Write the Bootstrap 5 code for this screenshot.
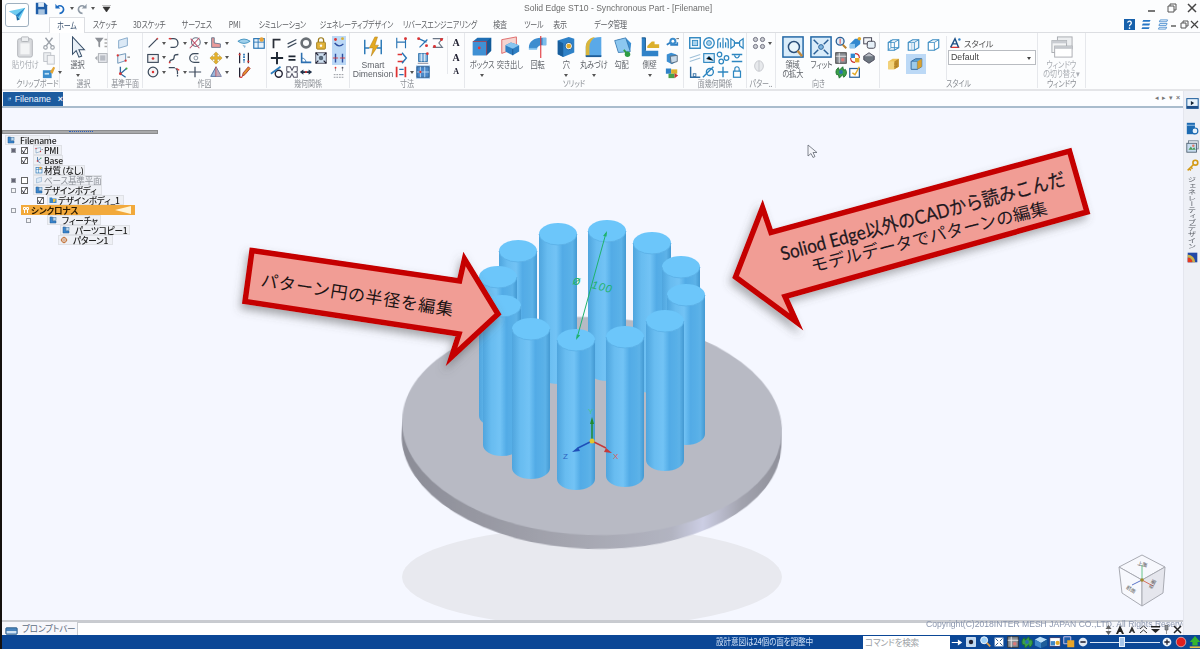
<!DOCTYPE html>
<html lang="ja">
<head>
<meta charset="utf-8">
<title>Solid Edge ST10</title>
<link href="https://cdn.jsdelivr.net/npm/bootstrap@5.3.0/dist/css/bootstrap.min.css" rel="stylesheet">
<style>
html,body{height:100%;margin:0;overflow:hidden;background:#fff}
body{font-family:"Liberation Sans","Noto Sans CJK JP",sans-serif;font-size:9px;color:#555}
.app{width:1200px;height:649px;border-left:2px solid #15110f;background:#fcfdfe}
.jp{font-family:"Noto Sans CJK JP","Liberation Sans",sans-serif;font-feature-settings:"palt";letter-spacing:-.2px}
.titlebar{height:17px}
.appbtn{position:absolute;left:3px;top:3px;width:24px;height:24px;border:1px solid #9fb0bf;border-radius:3px;background:#fff}
.qat{padding-left:33px;height:17px}
.wintitle{position:absolute;left:522px;top:2px;font-size:8.6px;color:#6d6d6d;white-space:nowrap;line-height:13px;filter:blur(.3px)}
.winbtns{position:absolute;right:2px;top:2px}
.tabs{height:16px;padding-left:47px;border-bottom:1px solid #dcdee2;position:relative;filter:blur(.25px)}
.rtab{font-size:9.2px;color:#5d5f63;line-height:15px;white-space:nowrap;display:flex;justify-content:center;flex:none}
.rtab>span{display:inline-block;transform:scaleX(.76)}
.rtab.on{background:#fff;border:1px solid #dcdee2;border-bottom:0;height:17px;color:#38506d;width:36px}
.w-a{width:40px}.w-b{width:48px}.w-c{width:48px}.w-d{width:28px}.w-e{width:66px}.w-f{width:82px}.w-g{width:86px}.w-h{width:34px}.w-i{width:34px}.w-j{width:18px}.w-k{width:84px}
.helpbar{position:absolute;right:1px;top:0;height:14px;gap:1px}
.ribbon{height:58px;background:#fcfdfe;border-bottom:2px solid #e4e5e8;filter:blur(.28px)}
.rg{height:55px;position:relative;border-right:1px solid #e6e8ec;flex:none;padding-top:3px}
.rl{position:absolute;left:0;right:0;bottom:-1px;text-align:center;font-size:8.6px;line-height:11px;color:#8a8e94;white-space:nowrap;transform:scaleX(.82)}
.rw{display:flex;height:14.5px;align-items:center}
.ic{width:14px;height:14px;flex:none;display:block}
.ic2{width:15px;height:14px;flex:none;display:block}
.ca{width:7px;flex:none;text-align:center;font-size:0;display:flex;justify-content:center}
.ca::after{content:"";border:2px solid transparent;border-top:3px solid #555;margin-top:2px}
.ca.nn::after{display:none}
.bb{display:flex;flex-direction:column;align-items:center;flex:none;color:#60646a;font-size:8.8px;line-height:8.6px;white-space:nowrap}
.bb>span{display:inline-block;transform:scaleX(.82)}
.bb svg{width:24px;height:22px;flex:none;margin-bottom:3px}
.bcar{display:block;width:0;height:0;border:2px solid transparent;border-top:3px solid #555;margin-top:4px}
.dis{color:#a9adb3}
.hl{background:#bcd9f6}
.g1{width:58px;padding-left:8px}.g1 .rl{left:10px}.g2{width:48px;padding-left:6px}.g3{width:35px;padding-left:8px}
.g4{width:124px;padding-left:3px}.g5{width:83px;padding-left:3px}.g6{width:115px;padding-left:4px}
.g7{width:219px;padding-left:3px}.g8{width:63px;padding-left:4px}.g9{width:29px;padding-left:5px}
.g10{width:104px;padding-left:3px}.g11{width:158px;padding-left:6px}.g12{width:48px}
.w28{width:28px}.w38{width:38px}
.sdim{font-family:"Liberation Sans",sans-serif;letter-spacing:0;font-size:8.6px}
.sdim>span{transform:none}
.sp1{width:1px;flex:none}.sp2{width:2px;flex:none}.sp4{width:4px;flex:none}.sp7{width:7px;flex:none}
.vsep{width:1px;height:38px;background:#e6e8ec;margin:0 1px;flex:none}
.aa{width:14px;height:14.5px;font:700 10px/14px "Liberation Serif",serif;color:#223;text-align:center}
.stylesel{width:88px;height:15px;border:1px solid #b9bcc1;background:#fff;font-size:8.8px;line-height:13px;padding-left:2px;color:#444;position:relative;font-family:"Liberation Sans",sans-serif;letter-spacing:0}
.stylesel::after{content:"";position:absolute;right:4px;top:6px;border:2.5px solid transparent;border-top:3px solid #444}
.stlab{font-size:8.4px;line-height:14px;gap:2px;color:#555}
.cubehl{background:#bcd9f6;width:20px;height:20px;display:flex;align-items:center;justify-content:center}
.docrow{height:15px;position:relative;background:#fcfdff}
.doctab{position:absolute;left:1px;top:1px;width:60px;height:14px;background:#1c5b9f;color:#eef5ff;font-size:8.8px;line-height:14px;padding-left:4px;gap:3px}
.doctools{position:absolute;right:3px;top:3px;gap:3px;font-size:7px;color:#777;line-height:8px}
.rule{height:2px;background:#a9bccd}
.ws{position:relative;height:512px;background:#f5f7ff;overflow:hidden}
.ws>svg{display:block}
.tree{position:absolute;left:0;top:22px;width:156px;color:#222;font-size:8.6px}
.trgrip{height:4px;background:#a8a9ab;border:1px solid #8b8c8e;margin-bottom:1px;position:relative}
.trgrip::after{content:"";position:absolute;left:66px;top:0;width:24px;border-top:1px dotted #2a5fc0}
.tr{height:10px;display:flex;align-items:center;position:relative;filter:blur(.2px)}
.exp{position:absolute;width:5px;height:5px;border:1px solid #9a9ea6;background:#f4f4f6;top:3px}
.exp.fill::after{content:"";display:block;width:3px;height:3px;background:#667;}
.cb{position:absolute;width:7px;height:7px;border:1px solid #666;background:#fff;top:2px;font-size:7px;line-height:5px;color:#223;text-align:center;font-weight:700}
.chip{position:absolute;top:0;height:10px;background:#eef0f5;border:1px solid #dfe1e6;display:flex;align-items:center;gap:1px;white-space:nowrap;line-height:8px;font-weight:500;padding-left:1px}
.chip svg{width:8px;height:8px;flex:none}
.grey{color:#8e9299;font-weight:400}
.orange{background:#f2a93b;border:0;font-weight:700;color:#2a1a00}
.side{width:17px;flex:none;background:#eef0f6;border-left:1px solid #e4e6ee;position:relative;padding-top:2px;align-items:center}
.side svg{display:block}
.vtxt{writing-mode:vertical-rl;font-size:8.4px;line-height:10px;color:#5c6068;white-space:nowrap;height:72px;margin:0;transform:scaleY(.74);transform-origin:top}
.prompt{height:15px;border-top:2px solid #c9cbd0;background:#f7f7fb;padding-left:3px;position:relative;gap:4px;font-size:8.6px;color:#5d6c80;line-height:13px}
.pinput{width:1032px;height:13px;background:#fff;border:1px solid #c7cacf;border-bottom:0;flex:none;margin-left:-1px}
.ptools{position:absolute;right:1px;top:1px;gap:3px;height:13px}
.copyr{position:absolute;left:924px;top:-2px;font-size:8.6px;color:#8b96ae;white-space:nowrap;line-height:9px;filter:blur(.25px);font-family:"Liberation Sans",sans-serif;letter-spacing:0}
.status{height:14px;background:#0b4796;position:relative;color:#cfe0f6}
.stmsg{position:absolute;left:714px;top:0;font-size:8.8px;line-height:14px;white-space:nowrap;transform:scaleX(.87);transform-origin:left}
.stsearch{position:absolute;left:861px;top:1px;width:87px;height:13px;background:#fff;color:#9b9fa5;font-size:8.6px;line-height:13px;padding-left:2px}
.sticons{position:absolute;left:948px;top:0;height:14px;gap:0}
.sticons svg{width:14px;height:14px;flex:none;display:block}
.slider{width:70px;height:14px;flex:none;position:relative}
.slider::before{content:"";position:absolute;left:0;right:0;top:7px;border-top:1px solid #dbe7f7}
.slider::after{content:"";position:absolute;left:29px;top:2px;width:6px;height:10px;background:#a9c6ea;border:1px solid #e8f0fa}
</style>
</head>
<body>
<svg width="0" height="0" class="position-absolute">
<defs>
<linearGradient id="cg" x1="0" x2="1" y1="0" y2="0"><stop offset="0" stop-color="#4fa5de"/><stop offset=".22" stop-color="#68bcf0"/><stop offset=".45" stop-color="#72c3f5"/><stop offset=".62" stop-color="#52abe6"/><stop offset=".88" stop-color="#5cb2e8"/><stop offset="1" stop-color="#4499d2"/></linearGradient>
<linearGradient id="dk" x1="0" x2="1" y1="0" y2="0"><stop offset="0" stop-color="#8b8c96"/><stop offset=".45" stop-color="#a4a5af"/><stop offset=".72" stop-color="#b2b4c1"/><stop offset=".8" stop-color="#cccee4"/><stop offset=".9" stop-color="#a2a3ae"/><stop offset="1" stop-color="#8f909a"/></linearGradient>
<filter id="ds" x="-10%" y="-20%" width="125%" height="150%"><feDropShadow dx="-2" dy="5" stdDeviation="4.5" flood-color="#555" flood-opacity=".5"/></filter>
<filter id="ds2" x="-10%" y="-20%" width="125%" height="150%"><feDropShadow dx="-3" dy="5" stdDeviation="4.5" flood-color="#555" flood-opacity=".45"/></filter>
<filter id="soft"><feGaussianBlur stdDeviation=".3"/></filter>
<g id="cyl"><path d="M-19 0V139A19 11 0 0 0 19 139V0Z" fill="url(#cg)"/><ellipse rx="19" ry="11" fill="#6cc6fa"/><path d="M-19 0A19 11 0 0 0 19 0" fill="none" stroke="#5aaee4" stroke-width=".8"/></g>

<symbol id="scis" viewBox="0 0 16 16"><path d="M4 2l7 9M12 2l-7 9" stroke="#9aa0a8" stroke-width="1.6" fill="none"/><circle cx="4" cy="13" r="2" fill="none" stroke="#9aa0a8" stroke-width="1.3"/><circle cx="12" cy="13" r="2" fill="none" stroke="#9aa0a8" stroke-width="1.3"/></symbol>
<symbol id="copy" viewBox="0 0 16 16"><rect x="2" y="2" width="8" height="10" fill="#eceef1" stroke="#bcc0c6"/><rect x="6" y="5" width="8" height="10" fill="#f3f4f6" stroke="#bcc0c6"/></symbol>
<symbol id="brush" viewBox="0 0 16 16"><rect x="1" y="6" width="10" height="9" fill="#3a8ccc"/><path d="M9 8l4-6 2 1-3 7z" fill="#e2a534"/><path d="M3 9h5v2H3z" fill="#bfe0f5"/></symbol>
<symbol id="filt" viewBox="0 0 16 16"><path d="M1 2h10l-4 5v6l-2-1V7z" fill="#8d9197"/><path d="M12 4h3M12 8h3M12 12h3" stroke="#aaa" stroke-width="1.5"/></symbol>
<symbol id="grp" viewBox="0 0 16 16"><rect x="5" y="3" width="10" height="10" fill="#e8eaee" stroke="#a8acb2"/><rect x="7" y="5" width="6" height="6" fill="#b8bcc4"/><path d="M1 8l3-3v6z" fill="#a8acb2"/></symbol>
<symbol id="pl1" viewBox="0 0 16 16"><path d="M3 5l10-3v9L3 14z" fill="#dbe9f6" stroke="#7ea3c6"/></symbol>
<symbol id="pl2" viewBox="0 0 16 16"><path d="M2 5l9-2v8l-9 3z" fill="#eef3f9" stroke="#5f8ab0"/><circle cx="2" cy="5" r="1.3" fill="#d33"/><circle cx="11" cy="11" r="1.3" fill="#d33"/><path d="M13 7h3" stroke="#555"/></symbol>
<symbol id="pl3" viewBox="0 0 16 16"><path d="M5 2v8l6 4M5 10l7-6" stroke="#2d6aa0" stroke-width="1.5" fill="none"/><circle cx="5" cy="10" r="1.6" fill="#d33"/><circle cx="12" cy="4" r="1.2" fill="#4a4"/></symbol>
<symbol id="ln" viewBox="0 0 16 16"><path d="M3 13L13 3" stroke="#3d4b5c" stroke-width="1.5"/><circle cx="13" cy="3" r="1" fill="#d44"/></symbol>
<symbol id="arc" viewBox="0 0 16 16"><path d="M3 3h4a5 5 0 0 1 1 10H4" stroke="#3d4b5c" stroke-width="1.5" fill="none"/><path d="M2 3h3" stroke="#d33" stroke-width="1.6"/></symbol>
<symbol id="xc" viewBox="0 0 16 16"><circle cx="9" cy="7" r="5" stroke="#6d7a8a" stroke-width="1.3" fill="none"/><path d="M3 3l10 11M13 2L2 14" stroke="#c0506a" stroke-width="1.2"/></symbol>
<symbol id="cor" viewBox="0 0 16 16"><path d="M3 2h3v6l7 1v4H3z" fill="#ea9a9a" stroke="#64748b"/></symbol>
<symbol id="eye" viewBox="0 0 16 16"><path d="M1 6q7-5 14 0q-7 5-14 0z" fill="#9fd0ec" stroke="#3d8fbd"/><path d="M6 10l4 1-1 3z" fill="#8fb8d6"/></symbol>
<symbol id="note" viewBox="0 0 16 16"><rect x="2" y="3" width="12" height="11" fill="#e7f2fb" stroke="#2874b4" stroke-width="1.3"/><path d="M2 7h12M7 3v11" stroke="#2874b4"/><circle cx="11" cy="4" r="2.5" fill="#e8a33a"/></symbol>
<symbol id="rc" viewBox="0 0 16 16"><rect x="2" y="4" width="12" height="9" fill="#f0f1f3" stroke="#3d4b5c" stroke-width="1.3"/><circle cx="8" cy="8.5" r="1.5" fill="#d33"/></symbol>
<symbol id="cv" viewBox="0 0 16 16"><path d="M3 13c0-5 5-1 5-5s2-4 5-4" stroke="#3d4b5c" stroke-width="1.5" fill="none"/><circle cx="3" cy="13" r="1" fill="#d33"/></symbol>
<symbol id="con" viewBox="0 0 16 16"><path d="M12 3H7a5 5 0 0 0 0 10h6" stroke="#3d4b5c" stroke-width="1.4" fill="none"/><circle cx="9" cy="8" r="2.2" stroke="#7d8a99" fill="none"/></symbol>
<symbol id="mv" viewBox="0 0 16 16"><path d="M8 1l3 3H9.5v2.500H12V5l3 3-3 3V9.500H9.500V12H11l-3 3-3-3h1.500V9.500H4V11L1 8l3-3v1.500h2.500V4H5z" fill="#e6b22c" stroke="#9a7a1a" stroke-width=".4"/></symbol>
<symbol id="dc" viewBox="0 0 16 16"><path d="M3 2v12M13 2v12" stroke="#223" stroke-width="1.4"/><path d="M8 3v10" stroke="#2874b4" stroke-width="2" stroke-dasharray="2 1"/><circle cx="3" cy="4" r="1.2" fill="#d33"/><circle cx="13" cy="12" r="1.2" fill="#d33"/></symbol>
<symbol id="ci" viewBox="0 0 16 16"><circle cx="8" cy="8" r="5.5" fill="#f4f4f6" stroke="#3d4b5c" stroke-width="1.4"/><circle cx="8" cy="8" r="1.4" fill="#d33"/></symbol>
<symbol id="tr2" viewBox="0 0 16 16"><path d="M2 3h6a5 5 0 0 1 4 5v5" stroke="#3d4b5c" stroke-width="1.4" fill="none" stroke-dasharray="7 1"/><path d="M11 4l3 2" stroke="#d33" stroke-width="1.4"/></symbol>
<symbol id="pl" viewBox="0 0 16 16"><path d="M1 8h14M8 2v12" stroke="#3d4b5c" stroke-width="1.4"/></symbol>
<symbol id="tri" viewBox="0 0 16 16"><path d="M8 2l6 11H2z" fill="#9eb7da" stroke="#46689a"/><path d="M8 2v11" stroke="#c33"/><path d="M8 13l6 0-6-11z" fill="#d9a0a8" opacity=".6"/></symbol>
<symbol id="pen" viewBox="0 0 16 16"><path d="M3 3v11" stroke="#223" stroke-width="1.5"/><path d="M6 13l1-4 6-7 2 2-6 7z" fill="#e3932a" stroke="#a33"/><path d="M3 14h3" stroke="#d33" stroke-width="1.5"/></symbol>
<symbol id="gc" viewBox="0 0 16 16"><path d="M4 14V4h8" stroke="#2a2f38" stroke-width="2" fill="none"/></symbol>
<symbol id="gp" viewBox="0 0 16 16"><path d="M3 9l10-5M3 13l10-5" stroke="#3d4b5c" stroke-width="1.4"/></symbol>
<symbol id="gr" viewBox="0 0 16 16"><circle cx="8" cy="8" r="5" fill="none" stroke="#6a7076" stroke-width="3"/></symbol>
<symbol id="gl" viewBox="0 0 16 16"><rect x="3" y="7" width="10" height="8" rx="1" fill="#e2b33a" stroke="#9c7a1a"/><path d="M5 7V5a3 3 0 0 1 6 0v2" stroke="#9c7a1a" stroke-width="1.4" fill="none"/><circle cx="8" cy="11" r="1.4" fill="#fff"/></symbol>
<symbol id="gpl" viewBox="0 0 16 16"><path d="M1 8h14M8 1v14" stroke="#1e2733" stroke-width="2.2"/></symbol>
<symbol id="geq" viewBox="0 0 16 16"><path d="M4 6h8M4 10h8" stroke="#1e2733" stroke-width="2"/></symbol>
<symbol id="gan" viewBox="0 0 16 16"><path d="M3 2v11h11" stroke="#2c6fb0" stroke-width="1.8" fill="none"/><path d="M3 8a5 5 0 0 1 5 5" stroke="#2c6fb0" fill="none"/></symbol>
<symbol id="gsq" viewBox="0 0 16 16"><rect x="2" y="2" width="12" height="12" fill="#cde" stroke="#445"/><circle cx="8" cy="8" r="2.6" fill="#567"/><path d="M2 2l3 3M14 2l-3 3M2 14l3-3M14 14l-3-3" stroke="#223" stroke-width="1.4"/></symbol>
<symbol id="gt" viewBox="0 0 16 16"><circle cx="10" cy="10" r="4" fill="none" stroke="#223" stroke-width="1.6"/><path d="M1 10L12 2" stroke="#2c7dbd" stroke-width="2"/></symbol>
<symbol id="gs" viewBox="0 0 16 16"><path d="M2 2h4l2 4 2-4h4v5l-3 1 3 1v5h-4l-2-4-2 4H2V9l3-1-3-1z" fill="none" stroke="#556" stroke-width="1.2"/></symbol>
<symbol id="gar" viewBox="0 0 16 16"><path d="M1 8l4-3v2h6V5l4 3-4 3V9H5v2z" fill="#22324a"/><circle cx="8" cy="8" r="1.2" fill="#d33"/></symbol>
<symbol id="ghl1" viewBox="0 0 16 16"><circle cx="4" cy="4" r="1.6" fill="#d33"/><circle cx="12" cy="3" r="1.6" fill="#d9b030"/><path d="M3 8q5 6 10 1" stroke="#2c4ea0" stroke-width="1.6" fill="none"/></symbol>
<symbol id="ghl2" viewBox="0 0 16 16"><path d="M4 3v10M12 3v10" stroke="#2c4ea0" stroke-width="1.6"/><path d="M1 8h6M9 8h6" stroke="#d33"/></symbol>
<symbol id="gfx" viewBox="0 0 16 16"><path d="M4 3v4M12 3v4" stroke="#9a9ea6"/><circle cx="4" cy="3" r="1" fill="#e33"/><circle cx="12" cy="3" r="1" fill="#556"/><path d="M2 11h12M2 14h12" stroke="#8a8e96" stroke-dasharray="2 1"/></symbol>
<symbol id="d1" viewBox="0 0 16 16"><path d="M2 2v12M12 2v12M2 7h10" stroke="#2874b4" stroke-width="1.3"/><circle cx="12" cy="3" r="1.7" fill="#d33"/></symbol>
<symbol id="d2" viewBox="0 0 16 16"><path d="M3 3l9 4M4 13l9-9" stroke="#2874b4" stroke-width="1.4"/><circle cx="3" cy="3" r="1.7" fill="#d33"/><circle cx="12" cy="11" r="1.7" fill="#d33"/></symbol>
<symbol id="d3" viewBox="0 0 16 16"><path d="M2 3h11l-4 5 4 5H2" stroke="#6a7686" stroke-width="1.3" fill="none"/><circle cx="12" cy="4" r="1.7" fill="#d33"/><circle cx="4" cy="12" r="1.7" fill="#d33"/></symbol>
<symbol id="d5" viewBox="0 0 16 16"><rect x="3" y="3" width="10" height="9" fill="#7fb1dc" stroke="#2b6fa8"/><path d="M6 3v9M10 3v9" stroke="#fff"/><circle cx="13" cy="3" r="1.5" fill="#d33"/><path d="M2 14h12" stroke="#778"/></symbol>
<symbol id="d7" viewBox="0 0 16 16"><rect x="1" y="2" width="14" height="12" fill="#4a88c9" stroke="#23507f"/><path d="M5 2v12M10 2v12M1 8h14" stroke="#c7e0f6"/><circle cx="5" cy="8" r="1.3" fill="#d33"/></symbol>
<symbol id="d8" viewBox="0 0 16 16"><path d="M3 4h5M3 12h7" stroke="#d33" stroke-width="1.6"/><path d="M8 2l5 6-5 6" stroke="#2874b4" stroke-width="1.6" fill="none"/></symbol>
<symbol id="d9" viewBox="0 0 16 16"><path d="M3 2v12M13 2v12" stroke="#d33" stroke-width="2"/><path d="M6 5h5M6 11h5" stroke="#2874b4" stroke-width="1.6"/></symbol>
<symbol id="sd" viewBox="0 0 24 24"><path d="M3 4v16M21 4v16M3 13h5M16 13h5" stroke="#2d7ab8" stroke-width="1.6" fill="none"/><path d="M14 1L8 13h4l-2 9 8-12h-4l3-9z" fill="#e4a91f" stroke="#a8761a" stroke-width=".5"/></symbol>
<symbol id="b1" viewBox="0 0 24 24"><path d="M2 6l5-4h15v14l-5 5H2z" fill="#1f6fb4"/><path d="M2 6h15v15H2z" fill="#3f90d4"/><path d="M17 6l5-4v14l-5 5z" fill="#125a98"/><circle cx="9" cy="13" r="1.5" fill="#e33"/><path d="M2 6h15v15" stroke="#c33" fill="none" stroke-width=".7"/></symbol>
<symbol id="b2" viewBox="0 0 24 24"><path d="M3 4l16-3v12L3 19z" fill="#f6d4d0" stroke="#d66"/><path d="M7 10l6-3 9 3v7l-7 4-8-4z" fill="#2f7fc3"/><path d="M7 10l8 4 7-4-9-3z" fill="#87c4ef"/><path d="M15 14v7" stroke="#1a5a94"/></symbol>
<symbol id="b3" viewBox="0 0 24 24"><path d="M2 13C2 6 8 2 15 2h6v8h-5c-3 0-5 2-5 4z" fill="#3d8dcf"/><path d="M2 13h9v2H2z" fill="#7cbdeb"/><path d="M17 2h4v8h-4z" fill="#7cbdeb"/><path d="M15 0v24" stroke="#e0353a" stroke-width="1.2"/></symbol>
<symbol id="b4" viewBox="0 0 24 24"><path d="M3 5l12-4 6 2v15l-12 5-6-3z" fill="#2f82c8"/><path d="M3 5l6 3v15l-6-3z" fill="#195e9c"/><circle cx="15" cy="11" r="4" fill="#fff" stroke="#1a5a94"/><circle cx="15" cy="11" r="2.6" fill="#e2a92a"/></symbol>
<symbol id="b5" viewBox="0 0 24 24"><path d="M3 22V12C3 5 9 1 20 1v21z" fill="#5aa9e8"/><path d="M3 22V12C3 5 9 1 13 1C9 4 7 8 7 12v10z" fill="#d9b63c"/><path d="M3 22h17" stroke="#1e5d98" stroke-width="2"/></symbol>
<symbol id="b6" viewBox="0 0 24 24"><path d="M4 5l12-3 6 6-1 9-13 1z" fill="#3c8fd2"/><path d="M4 5l4 13 13-1-5-15z" fill="#8cc7f0" stroke="#1a5a94" stroke-width=".6"/><circle cx="18" cy="20" r="3" fill="#2f9d44"/><path d="M14 15l4 5" stroke="#2f9d44" stroke-width="2"/></symbol>
<symbol id="b7" viewBox="0 0 24 24"><path d="M3 2h4v14h14v6H3z" fill="#2f82c8"/><path d="M9 11l5-5h3v3h5v4H9z" fill="#dcb02c"/><path d="M3 2l4 0 0 14" stroke="#15548a" fill="none"/></symbol>
<symbol id="s1" viewBox="0 0 16 16"><path d="M2 10l5-3v3h7v-3" stroke="#2f7fc3" stroke-width="2" fill="none"/><circle cx="9" cy="6" r="4" fill="#3a8ccc"/><circle cx="9" cy="6" r="1.6" fill="#fff"/><path d="M13 3h3" stroke="#555"/></symbol>
<symbol id="s2" viewBox="0 0 16 16"><path d="M2 4l5-2 6 2v8l-5 3-6-3z" fill="#3c8fd2"/><path d="M6 6l8-1v7l-7 2z" fill="#c7d9e8" stroke="#567"/></symbol>
<symbol id="s3" viewBox="0 0 16 16"><path d="M1 4h6v6H1z" fill="#2f82c8"/><path d="M7 5h7v5H7z" fill="#dcb02c"/><path d="M4 10h7v5H4z" fill="#4aa04a"/><path d="M11 9l4 3-4 3z" fill="#c33"/></symbol>
<symbol id="f1" viewBox="0 0 16 16"><rect x="2" y="2" width="12" height="12" fill="none" stroke="#2d86c0" stroke-width="1.6"/><rect x="5" y="5" width="6" height="6" fill="#a9d3ee" stroke="#2d86c0"/></symbol>
<symbol id="f2" viewBox="0 0 16 16"><circle cx="8" cy="8" r="6" fill="none" stroke="#2d86c0" stroke-width="1.5"/><circle cx="8" cy="8" r="2.8" fill="#a9d3ee" stroke="#2d86c0"/></symbol>
<symbol id="f3" viewBox="0 0 16 16"><path d="M2 14V6a3 3 0 0 1 3-3M14 14V6a3 3 0 0 0-3-3M8 2v12M5 7v6M11 7v6" stroke="#2d86c0" stroke-width="1.4" fill="none"/></symbol>
<symbol id="f4" viewBox="0 0 16 16"><path d="M1 3l4 3v5l-4 3zM15 3l-4 3v5l4 3z" fill="none" stroke="#2d86c0" stroke-width="1.4"/><path d="M5 8h6" stroke="#2d86c0" stroke-width="2"/></symbol>
<symbol id="f5" viewBox="0 0 16 16"><path d="M2 8l12-4M2 12l12-4" stroke="#9fc0d8" stroke-width="1.4"/></symbol>
<symbol id="f6" viewBox="0 0 16 16"><rect x="2" y="3" width="12" height="10" fill="#e2f0fa" stroke="#2d86c0" stroke-width="1.3"/><path d="M5 9l3-3 5 5M8 13h5" stroke="#2d86c0"/></symbol>
<symbol id="f7" viewBox="0 0 16 16"><circle cx="4" cy="4" r="2.6" fill="none" stroke="#2d86c0" stroke-width="1.4"/><circle cx="12" cy="8" r="2.6" fill="none" stroke="#2d86c0" stroke-width="1.4"/><circle cx="6" cy="12" r="2.6" fill="none" stroke="#2d86c0" stroke-width="1.4"/></symbol>
<symbol id="f8" viewBox="0 0 16 16"><path d="M2 4h12M2 12h12" stroke="#2d86c0" stroke-width="1.6"/><path d="M5 5q3 6 6 0" stroke="#2d86c0" fill="none" stroke-width="1.4"/></symbol>
<symbol id="f9" viewBox="0 0 16 16"><path d="M3 2v12h11" stroke="#2d6aa0" stroke-width="1.6" fill="none"/><rect x="6" y="10" width="3" height="3" fill="none" stroke="#2d6aa0"/></symbol>
<symbol id="f10" viewBox="0 0 16 16"><circle cx="9" cy="8" r="4" fill="none" stroke="#2d86c0" stroke-width="1.5"/><path d="M1 14L13 2" stroke="#2d86c0" stroke-width="1.6"/></symbol>
<symbol id="f11" viewBox="0 0 16 16"><path d="M2 8h12M8 2v12" stroke="#2d86c0" stroke-width="1.6"/></symbol>
<symbol id="f12" viewBox="0 0 16 16"><rect x="4" y="7" width="8" height="7" fill="none" stroke="#2d86c0" stroke-width="1.4"/><path d="M5.500 7V4.500a2.500 2.500 0 0 1 5 0V7" fill="none" stroke="#2d86c0" stroke-width="1.3"/></symbol>
<symbol id="p1" viewBox="0 0 16 16"><circle cx="4" cy="4" r="2.4" fill="#c9ccd1" stroke="#667"/><circle cx="12" cy="4" r="2.4" fill="#c9ccd1" stroke="#667"/><circle cx="4" cy="12" r="2.4" fill="#c9ccd1" stroke="#667"/><circle cx="12" cy="12" r="2.4" fill="#c9ccd1" stroke="#667"/></symbol>
<symbol id="p2" viewBox="0 0 16 16"><ellipse cx="8" cy="8" rx="5" ry="6" fill="#e7e9ec" stroke="#c3c6cb"/><path d="M8 2v12" stroke="#c3c6cb"/></symbol>
<symbol id="z" viewBox="0 0 24 24"><rect x="1" y="1" width="22" height="22" fill="#d9ecfa" stroke="#2166a5" stroke-width="1.6"/><circle cx="13" cy="12" r="6" fill="#e9f5fc" stroke="#2a4f7a" stroke-width="1.6"/><path d="M17 16l5 6" stroke="#c4883b" stroke-width="2.6"/></symbol>
<symbol id="fit" viewBox="0 0 24 24"><rect x="1" y="1" width="22" height="22" fill="#d9ecfa" stroke="#2166a5" stroke-width="1.6"/><path d="M4 4l5 5M20 4l-5 5M4 20l5-5M20 20l-5-5" stroke="#2a5f96" stroke-width="1.6"/><circle cx="12" cy="12" r="2.6" fill="#7eb6e0" stroke="#2a5f96"/></symbol>
<symbol id="v1" viewBox="0 0 16 16"><circle cx="7" cy="6" r="4.5" fill="#dcecf8" stroke="#2a5f96" stroke-width="1.5"/><path d="M10 10l4 4" stroke="#b8802f" stroke-width="2.2"/><path d="M7 3v6" stroke="#d33"/></symbol>
<symbol id="v2" viewBox="0 0 16 16"><path d="M2 9l6-6h6v6l-6 5H2z" fill="#3188cf"/><path d="M2 9h6v5H2z" fill="#8bc6ef"/><circle cx="13" cy="3" r="2" fill="#e2a92a"/></symbol>
<symbol id="v3" viewBox="0 0 16 16"><rect x="2" y="2" width="9" height="7" fill="#f3f5f8" stroke="#334"/><rect x="6" y="6" width="9" height="8" rx="2" fill="#e6f0f8" stroke="#334"/></symbol>
<symbol id="v4" viewBox="0 0 16 16"><rect x="2" y="2" width="12" height="12" fill="#8c9096" stroke="#333"/><path d="M2 6h12M6 2v12" stroke="#eee"/><circle cx="10" cy="10" r="2" fill="#d77"/></symbol>
<symbol id="v5" viewBox="0 0 16 16"><path d="M3 3h5v5H3z" fill="#3188cf"/><path d="M8 8h5v5H8z" fill="#e2a92a"/><path d="M8 3q5 0 5 5M8 13q-5 0-5-5" stroke="#c33" stroke-width="1.3" fill="none"/></symbol>
<symbol id="v6" viewBox="0 0 16 16"><path d="M8 2l6 4-6 4-6-4z" fill="#b8bcc4" stroke="#445"/><path d="M2 6v4l6 4 6-4V6" fill="#6d7680" stroke="#445"/></symbol>
<symbol id="v7" viewBox="0 0 16 16"><path d="M3 11a6 6 0 0 1 2-8l1 3 4-4 1 4 2-1a6 6 0 0 1-2 9l-1-3-4 4-1-4z" fill="#3aa04a" stroke="#1f6f2e"/><circle cx="8" cy="8" r="2.2" fill="#2c6fb0"/></symbol>
<symbol id="v8" viewBox="0 0 16 16"><rect x="2" y="4" width="11" height="10" fill="#fff" stroke="#2a5f96" stroke-width="1.4"/><path d="M5 9l3 2 5-9" stroke="#e2a92a" stroke-width="1.6" fill="none"/></symbol>
<symbol id="q1" viewBox="0 0 16 16"><path d="M2 5l5-3h7v9l-5 3H2z" fill="none" stroke="#3a8cc2" stroke-width="1.3"/><path d="M2 5h7v9M9 5l5-3M5 2v9h9M5 11l-3 3" fill="none" stroke="#3a8cc2"/></symbol>
<symbol id="q2" viewBox="0 0 16 16"><path d="M2 5l5-3h7v9l-5 3H2z" fill="#edf5fb" stroke="#3a8cc2" stroke-width="1.3"/><path d="M2 5h7v9M9 5l5-3" fill="none" stroke="#3a8cc2"/><path d="M6 5v9" stroke="#9cc6e4"/></symbol>
<symbol id="q3" viewBox="0 0 16 16"><path d="M2 5l5-3h7v9l-5 3H2z" fill="#fff" stroke="#3a8cc2" stroke-width="1.3"/><path d="M2 5h7v9M9 5l5-3" fill="none" stroke="#3a8cc2"/></symbol>
<symbol id="q4" viewBox="0 0 16 16"><path d="M2 5l5-3h7v9l-5 3H2z" fill="#edc258"/><path d="M2 5h7v9H2z" fill="#f2d27a"/><path d="M9 5l5-3v9l-5 3z" fill="#bc8a2b"/><path d="M9 8l4 0M9 11l4 0" stroke="#a57820" stroke-dasharray="1 1"/></symbol>
<symbol id="q5" viewBox="0 0 16 16"><path d="M2 5l5-3h7v9l-5 3H2z" fill="#5da6d8" stroke="#2a5f96"/><path d="M2 5h7v9H2z" fill="#9ecbe8" stroke="#2a5f96" stroke-width=".6"/><path d="M9 5l5-3v9l-5 3z" fill="#d9a12f"/></symbol>
<symbol id="win" viewBox="0 0 24 24"><rect x="7" y="1" width="16" height="13" fill="#eceef0" stroke="#a6a9ae"/><rect x="1" y="5" width="16" height="13" fill="#f4f5f6" stroke="#a6a9ae"/><rect x="1" y="5" width="16" height="3" fill="#c9ccd1"/><rect x="4" y="11" width="19" height="12" fill="#fff" stroke="#a6a9ae"/><rect x="4" y="11" width="19" height="3" fill="#c4c7cc"/></symbol>
<symbol id="st1" viewBox="0 0 16 16"><path d="M3 13h10" stroke="#d33" stroke-width="1.5"/><path d="M3 13L8 3l4 10M5 9h5" stroke="#1f4f85" stroke-width="1.6" fill="none"/><circle cx="13" cy="4" r="1.4" fill="#2f82c8"/></symbol>
<symbol id="t3" viewBox="0 0 16 16"><path d="M1 5l6-3 8 3-7 4z" fill="#b8dcf4"/><path d="M1 5l7 4v6l-7-3z" fill="#3d86c7"/><path d="M8 9l7-4v7l-7 3z" fill="#1f5e9a"/></symbol>
<symbol id="t4" viewBox="0 0 16 16"><rect x="2" y="3" width="12" height="10" fill="#fff" stroke="#336"/><rect x="3" y="7" width="5" height="5" fill="#3d86c7"/><circle cx="11" cy="9" r="2.4" fill="#e2a92a"/></symbol>
<symbol id="t5" viewBox="0 0 16 16"><path d="M1 3h5l1 2h8v9H1z" fill="#3d86c7"/><path d="M8 6l5 0 0 5-5 2z" fill="#e8c24a"/></symbol>
<symbol id="key" viewBox="0 0 16 16"><circle cx="11.500" cy="4.500" r="3" fill="none" stroke="#d39a17" stroke-width="2"/><path d="M9 7l-7 7M4 12l2 2M6 10l2 2" stroke="#d39a17" stroke-width="1.800"/></symbol>
<symbol id="film" viewBox="0 0 16 16"><rect x="1" y="2" width="14" height="12" fill="#e9f3fb" stroke="#2563a0" stroke-width="1.300"/><rect x="1" y="11" width="14" height="3" fill="#204f88"/><path d="M6 5l4 2.500L6 10z" fill="#123"/></symbol>
<symbol id="lib" viewBox="0 0 16 16"><rect x="1" y="1" width="10" height="14" fill="#1d6bb2"/><path d="M1 4h10" stroke="#aed3f2"/><circle cx="11" cy="11" r="3.600" fill="#e6f2fb" stroke="#1d6bb2" stroke-width="1.400"/></symbol>
<symbol id="pics" viewBox="0 0 16 16"><rect x="3" y="1" width="12" height="10" fill="#e8eef4" stroke="#678"/><rect x="1" y="4" width="12" height="11" fill="#c7dcef" stroke="#456"/><path d="M3 12l3-4 2 3 2-2 2 3z" fill="#4a9a58"/><circle cx="9" cy="7" r="1.500" fill="#e27c6a"/></symbol>
<symbol id="heat" viewBox="0 0 16 16"><rect x="1" y="1" width="14" height="14" fill="#2148a8"/><path d="M1 15V8a7 7 0 0 1 7 7z" fill="#e6391f"/><path d="M8 15a7 7 0 0 0-7-7V4a11 11 0 0 1 11 11z" fill="#e8c23a" opacity=".85"/></symbol>
<symbol id="prb" viewBox="0 0 16 12"><rect x="1" y="2" width="14" height="8" rx="1" fill="#4a84bd" stroke="#24527f"/><rect x="2" y="6" width="12" height="3" fill="#cfe2f3"/></symbol>
<symbol id="tdoc" viewBox="0 0 16 16"><path d="M2 14V2h5v8h7v4z" fill="#3a86cf" stroke="#1f558e"/><rect x="8" y="3" width="6" height="6" fill="#bcdaf2" stroke="#3a6f9e"/></symbol>
<symbol id="tpat" viewBox="0 0 16 16"><circle cx="8" cy="8" r="5" fill="none" stroke="#c06a2a" stroke-width="2"/><path d="M8 1v14M1 8h14" stroke="#c06a2a"/></symbol>
</defs>
</svg>

<div class="app d-flex flex-column position-relative">
  <div class="appbtn">
    <svg viewBox="0 0 24 24" width="22" height="22"><path d="M3 8l18-4-6 13-4-5z" fill="#6ecdf0"/><path d="M3 8l8 4 10-8-9 12 1-2z" fill="#2383c7"/><path d="M11 12l1 6 3-1z" fill="#14659f"/></svg>
  </div>
  <div class="titlebar position-relative d-flex">
    <div class="qat d-flex align-items-center">
      <svg width="13" height="13" viewBox="0 0 16 16"><path d="M1 1h11l3 3v11H1z" fill="#1f5ea8"/><rect x="4" y="1" width="7" height="5" fill="#dceaf7"/><rect x="4" y="9" width="8" height="6" fill="#a8c4e0"/></svg>
      <svg style="margin-left:5px" width="13" height="13" viewBox="0 0 16 16"><path d="M3 2v6h6L7 6c2-1 5 0 5 3 0 2-2 4-4 4v2c4 0 6-3 6-6 0-5-6-7-9-4z" fill="#1c6ac0"/></svg>
      <span class="ca" style="margin-left:2px"></span>
      <svg style="margin-left:1px" width="13" height="13" viewBox="0 0 16 16"><path d="M13 2v6H7l2-2C7 5 4 6 4 9c0 2 2 4 4 4v2C4 15 2 12 2 9c0-5 6-7 9-4z" fill="#8f9aa6"/></svg>
      <span class="ca"></span>
      <svg style="margin-left:6px" width="9" height="7" viewBox="0 0 9 7"><path d="M0 0h9M1 2h7L4.500 7z" fill="#333" stroke="#333" stroke-width=".6"/></svg>
    </div>
    <div class="wintitle">Solid Edge ST10 - Synchronous Part - [Filename]</div>
    <div class="winbtns d-flex align-items-center gap-2">
      <svg width="12" height="12" viewBox="0 0 12 12"><path d="M2 9h7" stroke="#555" stroke-width="1.600"/></svg>
      <svg width="12" height="12" viewBox="0 0 12 12"><path d="M2 4h6v6H2zM4 4V2h6v6H8" fill="none" stroke="#555"/></svg>
      <svg width="12" height="12" viewBox="0 0 12 12"><path d="M2 2l8 8M10 2l-8 8" stroke="#444" stroke-width="1.500"/></svg>
    </div>
  </div>
  <div class="tabs d-flex jp">
    <div class="rtab on"><span>ホーム</span></div><div class="rtab w-a"><span>スケッチ</span></div><div class="rtab w-b"><span>3Dスケッチ</span></div><div class="rtab w-c"><span>サーフェス</span></div><div class="rtab w-d"><span>PMI</span></div><div class="rtab w-e"><span>シミュレーション</span></div><div class="rtab w-f"><span>ジェネレーティブデザイン</span></div><div class="rtab w-g"><span>リバースエンジニアリング</span></div><div class="rtab w-h"><span>検査</span></div><div class="rtab w-i"><span>ツール</span></div><div class="rtab w-j"><span>表示</span></div><div class="rtab w-k"><span>データ管理</span></div>
    <div class="helpbar d-flex align-items-center">
      <svg width="11" height="11" viewBox="0 0 12 12"><rect width="12" height="12" fill="#1660ab"/><path d="M4 4a2 2 0 1 1 3 2c-1 .6-1 1-1 2" fill="none" stroke="#fff" stroke-width="1.400"/><circle cx="6" cy="10" r=".9" fill="#fff"/></svg>
      <svg class="ms-1" width="12" height="11" viewBox="0 0 12 12"><path d="M3 1h8l-1 2H2zM2.500 5h8l-1 2h-8zM2 9h8L9 11H1z" fill="#2676c5"/></svg>
      <svg class="ms-1" width="12" height="11" viewBox="0 0 12 12"><path d="M3 1h8l-1 2H2zM2.500 5h8l-1 2h-8zM2 9h8L9 11H1z" fill="#fff" stroke="#2676c5" stroke-width=".8"/></svg>
      <svg width="9" height="9" viewBox="0 0 9 9"><path d="M1 6h5" stroke="#555" stroke-width="1.400"/></svg>
      <svg width="9" height="9" viewBox="0 0 9 9"><path d="M1 3h5v5H1zM3 3V1h5v5H6" fill="none" stroke="#555"/></svg>
      <svg width="9" height="9" viewBox="0 0 9 9"><path d="M1 1l7 7M8 1L1 8" stroke="#444" stroke-width="1.200"/></svg>
    </div>
  </div>

  <div class="ribbon d-flex jp">
    <div class="rg g1 d-flex dis">
      <div class="bb" style="width:30px;color:#a9adb3"><svg viewBox="0 0 24 24"><rect x="4" y="3" width="16" height="20" rx="2" fill="#d8dadd" stroke="#aeb1b6"/><rect x="8" y="1" width="8" height="5" rx="1" fill="#eceef0" stroke="#aeb1b6"/><rect x="7" y="8" width="10" height="12" fill="#f3f4f5"/></svg><span>貼り付け</span></div>
      <div style="margin-left:2px"><div class="rw"><svg class="ic"><use href="#scis"/></svg></div><div class="rw"><svg class="ic"><use href="#copy"/></svg></div><div class="rw"><svg class="ic"><use href="#brush"/></svg><span class="ca"></span></div></div>
      <div class="rl">クリップボード</div>
    </div>
    <div class="rg g2 d-flex">
      <div class="bb" style="width:24px"><svg viewBox="0 0 24 24"><path d="M6 1l13 14-6 0 3 7-3 1-3-7-4 4z" fill="#e9f0f7" stroke="#39506a" stroke-width="1.100"/></svg><span>選択</span><i class="bcar"></i></div>
      <div style="margin-left:4px"><div class="rw"><svg class="ic"><use href="#filt"/></svg></div><div class="rw"><svg class="ic"><use href="#grp"/></svg></div></div>
      <div class="rl">選択</div>
    </div>
    <div class="rg g3">
      <div class="rw"><svg class="ic"><use href="#pl1"/></svg></div><div class="rw"><svg class="ic"><use href="#pl2"/></svg></div><div class="rw"><svg class="ic"><use href="#pl3"/></svg></div>
      <div class="rl">基準平面</div>
    </div>
    <div class="rg g4">
      <div class="rw"><svg class="ic"><use href="#ln"/></svg><span class="ca"></span><svg class="ic"><use href="#arc"/></svg><span class="ca"></span><svg class="ic"><use href="#xc"/></svg><span class="ca"></span><svg class="ic"><use href="#cor"/></svg><span class="ca"></span><span class="sp7"></span><svg class="ic"><use href="#eye"/></svg><span class="sp1"></span><svg class="ic"><use href="#note"/></svg></div>
      <div class="rw"><svg class="ic"><use href="#rc"/></svg><span class="ca"></span><svg class="ic"><use href="#cv"/></svg><span class="ca nn"></span><svg class="ic"><use href="#con"/></svg><span class="ca nn"></span><svg class="ic"><use href="#mv"/></svg><span class="ca"></span><span class="sp7"></span><svg class="ic"><use href="#dc"/></svg></div>
      <div class="rw"><svg class="ic"><use href="#ci"/></svg><span class="ca"></span><svg class="ic"><use href="#tr2"/></svg><span class="ca"></span><svg class="ic"><use href="#pl"/></svg><span class="ca nn"></span><svg class="ic"><use href="#tri"/></svg><span class="ca"></span><span class="sp7"></span><svg class="ic"><use href="#pen"/></svg></div>
      <div class="rl">作図</div>
    </div>
    <div class="rg g5 d-flex">
      <div style="margin-right:4px">
        <div class="rw"><svg class="ic"><use href="#gc"/></svg><span class="sp1"></span><svg class="ic"><use href="#gp"/></svg><svg class="ic"><use href="#gr"/></svg><span class="sp1"></span><svg class="ic"><use href="#gl"/></svg></div>
        <div class="rw"><svg class="ic"><use href="#gpl"/></svg><span class="sp1"></span><svg class="ic"><use href="#geq"/></svg><svg class="ic"><use href="#gan"/></svg><span class="sp1"></span><svg class="ic"><use href="#gsq"/></svg></div>
        <div class="rw"><svg class="ic"><use href="#gt"/></svg><span class="sp1"></span><svg class="ic"><use href="#gs"/></svg><svg class="ic"><use href="#gar"/></svg></div>
      </div>
      <div><div class="hl"><div class="rw"><svg class="ic"><use href="#ghl1"/></svg></div><div class="rw"><svg class="ic"><use href="#ghl2"/></svg></div></div><div class="rw"><svg class="ic"><use href="#gfx"/></svg></div></div>
      <div class="rl">幾何関係</div>
    </div>
    <div class="rg g6 d-flex">
      <div class="bb w38 sdim"><svg viewBox="0 0 24 24"><use href="#sd"/></svg><span>Smart</span><span>Dimension</span></div>
      <div style="margin-left:2px;width:52px">
        <div class="rw"><span class="sp1"></span><svg class="ic"><use href="#d1"/></svg><span class="sp7"></span><svg class="ic"><use href="#d2"/></svg><span class="sp1"></span><svg class="ic"><use href="#d3"/></svg></div>
        <div class="rw"><span class="sp1"></span><svg class="ic"><use href="#d8"/></svg><span class="sp7"></span><svg class="ic"><use href="#d5"/></svg></div>
        <div class="rw"><svg class="ic"><use href="#d9"/></svg><span class="ca"></span><span class="sp1"></span><span class="hl"><svg class="ic"><use href="#d7"/></svg></span></div>
      </div>
      <div class="vsep"></div>
      <div class="d-flex flex-column"><span class="aa">A</span><span class="aa">A</span><span class="aa" style="font-size:8px">A</span></div>
      <div class="rl">寸法</div>
    </div>
    <div class="rg g7 d-flex">
      <div class="bb w28"><svg><use href="#b1"/></svg><span>ボックス</span><i class="bcar"></i></div>
      <div class="bb w28"><svg><use href="#b2"/></svg><span>突き出し</span></div>
      <div class="bb w28"><svg><use href="#b3"/></svg><span>回転</span></div>
      <div class="bb w28"><svg><use href="#b4"/></svg><span>穴</span><i class="bcar"></i></div>
      <div class="bb w28"><svg><use href="#b5"/></svg><span>丸みづけ</span><i class="bcar"></i></div>
      <div class="bb w28"><svg><use href="#b6"/></svg><span>勾配</span></div>
      <div class="bb w28"><svg><use href="#b7"/></svg><span>側壁</span><i class="bcar"></i></div>
      <div style="margin-left:1px"><div class="rw"><svg class="ic"><use href="#s1"/></svg></div><div class="rw"><svg class="ic"><use href="#s2"/></svg></div><div class="rw"><svg class="ic"><use href="#s3"/></svg></div></div>
      <div class="rl">ソリッド</div>
    </div>
    <div class="rg g8">
      <div class="rw"><svg class="ic"><use href="#f1"/></svg><svg class="ic"><use href="#f2"/></svg><svg class="ic"><use href="#f3"/></svg><svg class="ic"><use href="#f4"/></svg></div>
      <div class="rw"><svg class="ic"><use href="#f5"/></svg><svg class="ic"><use href="#f6"/></svg><svg class="ic"><use href="#f7"/></svg><svg class="ic"><use href="#f8"/></svg></div>
      <div class="rw"><svg class="ic"><use href="#f9"/></svg><svg class="ic"><use href="#f10"/></svg><svg class="ic"><use href="#f11"/></svg><svg class="ic"><use href="#f12"/></svg></div>
      <div class="rl">面幾何関係</div>
    </div>
    <div class="rg g9">
      <div class="rw"><svg class="ic"><use href="#p1"/></svg><span class="ca"></span></div>
      <div class="rw mt-2"><svg class="ic"><use href="#p2"/></svg></div>
      <div class="rl">パター..</div>
    </div>
    <div class="rg g10 d-flex">
      <div class="bb w28"><svg><use href="#z"/></svg><span>領域</span><span>の拡大</span></div>
      <div class="bb w28"><svg><use href="#fit"/></svg><span>フィット</span></div>
      <div style="margin-left:-1px">
        <div class="rw"><svg class="ic"><use href="#v1"/></svg><svg class="ic"><use href="#v2"/></svg><svg class="ic"><use href="#v3"/></svg></div>
        <div class="rw"><svg class="ic"><use href="#v4"/></svg><svg class="ic"><use href="#v5"/></svg><svg class="ic"><use href="#v6"/></svg></div>
        <div class="rw"><svg class="ic"><use href="#v7"/></svg><svg class="ic"><use href="#v8"/></svg></div>
      </div>
      <div class="rl" style="right:18px">向き</div>
    </div>
    <div class="rg g11 d-flex">
      <div style="width:60px;flex:none">
        <div class="d-flex gap-1 align-items-center" style="height:18px"><svg class="ic2" style="margin-right:1px"><use href="#q1"/></svg><svg class="ic2"><use href="#q2"/></svg><svg class="ic2" style="margin-left:1px"><use href="#q3"/></svg></div>
        <div class="d-flex align-items-center" style="gap:2px"><svg class="ic2" style="margin-right:3px"><use href="#q4"/></svg><span class="cubehl"><svg class="ic2"><use href="#q5"/></svg></span></div>
      </div>
      <div class="vsep" style="margin:0 1px 0 0;height:44px"></div>
      <div>
        <div class="d-flex stlab align-items-center"><svg class="ic"><use href="#st1"/></svg><span>スタイル</span></div>
        <div class="stylesel">Default</div>
      </div>
      <div class="rl">スタイル</div>
    </div>
    <div class="rg g12">
      <div class="bb w-100" style="color:#a9adb3"><svg><use href="#win"/></svg><span>ウィンドウ</span><span>の切り替え▾</span></div>
      <div class="rl">ウィンドウ</div>
    </div>
  </div>

  <div class="d-flex">
    <div style="width:1181px;flex:none">
      <div class="docrow">
        <div class="doctab d-flex align-items-center"><svg width="10" height="10" viewBox="0 0 16 16"><use href="#tdoc"/></svg><span>Filename</span><span class="ms-1 fw-bold">×</span></div>
        <div class="doctools d-flex align-items-center"><span>◂</span><span>▸</span><span>▾</span><span class="fw-bold">×</span></div>
      </div>
      <div class="rule"></div>
      <div class="ws">
        <svg width="1181" height="512" viewBox="2 108 1181 512" xmlns="http://www.w3.org/2000/svg">
          <ellipse cx="592" cy="577" rx="190" ry="50" fill="#e8e9ef"/>
          <g transform="rotate(2 591 426)" filter="url(#soft)">
            <path d="M402 426v14a190 109 0 0 0 380 0v-14z" fill="url(#dk)"/>
            <ellipse cx="592" cy="426" rx="190" ry="109" fill="#b8bac4"/>
          </g>
          <g filter="url(#soft)">
            <use href="#cyl" x="607" y="231"/><use href="#cyl" x="558" y="234"/><use href="#cyl" x="652" y="243"/><use href="#cyl" x="518" y="251"/>
            <use href="#cyl" x="681" y="267"/><use href="#cyl" x="498" y="277"/><use href="#cyl" x="686" y="295"/><use href="#cyl" x="502" y="306"/>
            <use href="#cyl" x="665" y="321"/><use href="#cyl" x="531" y="329"/><use href="#cyl" x="625" y="337"/><use href="#cyl" x="576" y="340"/>
          </g>
          <g>
            <path d="M606 233L577 338" stroke="#1fb26d" stroke-width="1" fill="none"/>
            <path d="M607 231l-4 5 3.500 .5zM576 340l4.200-4.800-3.400-.8z" fill="#1fb26d"/>
            <text x="572" y="285" font-family="Liberation Sans" font-style="italic" font-size="13" fill="#1fb26d" transform="rotate(12 577 284)">ø</text>
            <text x="591" y="288" font-family="Liberation Sans" font-style="italic" font-size="11" letter-spacing="1" fill="#1fb26d" transform="rotate(14 591 288)">100</text>
          </g>
          <g>
            <path d="M592 441V420" stroke="#238b2f" stroke-width="1.500"/><path d="M592 417l-2 7h4z" fill="#238b2f"/>
            <path d="M592 441l-14 7" stroke="#1f4fb8" stroke-width="1.500"/><path d="M572 452l8-1-2-4z" fill="#1f4fb8"/>
            <path d="M592 441l14 7" stroke="#c43a3a" stroke-width="1.500"/><path d="M612 453l-8-1 2-4z" fill="#c43a3a"/>
            <circle cx="592" cy="441" r="2.500" fill="#e4c52c"/>
            <text x="588" y="414" font-size="8" font-family="Liberation Sans" fill="#46c48a">Y</text>
            <text x="563" y="459" font-size="8" font-family="Liberation Sans" fill="#2a63c0">Z</text>
            <text x="613" y="459" font-size="8" font-family="Liberation Sans" fill="#d8605a">X</text>
          </g>
          <g filter="url(#ds)">
            <path d="M252 250.500L459.500 281L464.500 259L498 314L451.500 357L459 334L245 301.500Z" fill="#f19d95" stroke="#c50000" stroke-width="5.500" stroke-linejoin="miter"/>
          </g>
          <text x="357" y="301" text-anchor="middle" font-family="Noto Sans CJK JP,sans-serif" font-size="17" fill="#1c1414" textLength="194" lengthAdjust="spacing" transform="rotate(8.800 357 295)">パターン円の半径を編集</text>
          <g filter="url(#ds2)">
            <path d="M735.500 277L762.500 207.500L771 232.500L1069.500 151L1087 212L785 296.500L796.500 322Z" fill="#f19d95" stroke="#c50000" stroke-width="5.500" stroke-linejoin="miter"/>
          </g>
          <text x="923" y="223" text-anchor="middle" font-family="Lato,Noto Sans CJK JP,sans-serif" font-size="19" fill="#1e1820" stroke="#1e1820" stroke-width=".25" textLength="294" lengthAdjust="spacingAndGlyphs" transform="rotate(-15 923 217)">Soliod Edge以外のCADから読みこんだ</text>
          <text x="929" y="243" text-anchor="middle" font-family="Noto Sans CJK JP,sans-serif" font-size="17" fill="#1e1820" textLength="243" lengthAdjust="spacingAndGlyphs" transform="rotate(-14 929 237)">モデルデータでパターンの編集</text>
          <path d="M808 145v11l3-2.500 2 4 2-1-2-4h4z" fill="#f4f5fa" stroke="#656b75" stroke-width=".8"/>
          <g stroke="#a9abb3" stroke-width="1" fill="#f7f8fd">
            <path d="M1142 555L1165 567L1142 580L1119 567Z"/>
            <path d="M1119 567L1142 580V606L1122 593Z"/>
            <path d="M1165 567L1142 580V606L1163 593Z" fill="#e5e6ed"/>
          </g>
          <path d="M1142 580V565" stroke="#66c48a"/><path d="M1142 580l-10 5" stroke="#5a74c8"/><path d="M1142 580l11 6" stroke="#d8705f"/><circle cx="1142" cy="580" r="1.800" fill="#a08a2a"/>
          <text x="1142" y="566" text-anchor="middle" font-size="5" font-family="Noto Sans CJK JP" fill="#555" transform="rotate(15 1142 566)">上面</text>
          <text x="1130" y="591" text-anchor="middle" font-size="5" font-family="Noto Sans CJK JP" fill="#555" transform="rotate(32 1130 591)">前面</text>
          <text x="1154" y="585" text-anchor="middle" font-size="5" font-family="Noto Sans CJK JP" fill="#555" transform="rotate(-62 1154 585)">右面</text>
        </svg>
        <div class="tree jp">
          <div class="trgrip"></div>
          <div class="tr"><span class="chip" style="left:3px;width:45px"><svg><use href="#tdoc"/></svg><span class="ms-1">Filename</span></span></div>
          <div class="tr"><span class="exp fill" style="left:9px"></span><span class="cb" style="left:19px">✓</span><span class="chip" style="left:31px;width:29px"><svg><use href="#pl2"/></svg>PMI</span></div>
          <div class="tr"><span class="cb" style="left:19px">✓</span><span class="chip" style="left:31px;width:30px"><svg><use href="#pl3"/></svg>Base</span></div>
          <div class="tr"><span class="chip" style="left:31px;width:52px"><svg><use href="#note"/></svg>材質 (なし)</span></div>
          <div class="tr"><span class="exp fill" style="left:9px"></span><span class="cb" style="left:19px"></span><span class="chip grey" style="left:31px;width:69px"><svg><use href="#pl1"/></svg>ベース基準平面</span></div>
          <div class="tr"><span class="exp" style="left:9px"></span><span class="cb" style="left:19px">✓</span><span class="chip" style="left:31px;width:69px"><svg><use href="#tdoc"/></svg>デザインボディ</span></div>
          <div class="tr"><span class="cb" style="left:35px">✓</span><span class="chip" style="left:45px;width:77px"><svg><use href="#t5"/></svg>デザインボディ_1</span></div>
          <div class="tr"><span class="exp" style="left:9px"></span><span class="chip orange" style="left:19px;width:114px"><svg viewBox="0 0 16 16"><path d="M3 3h4v4H3zM9 3h4v4H9zM5 7v7M11 7v7" stroke="#fff" fill="none" stroke-width="2"/></svg>シンクロナス<svg class="ms-auto" style="width:16px;margin-right:4px" viewBox="0 0 16 8"><path d="M0 4l16-4v8z" fill="#fff4d6"/></svg></span></div>
          <div class="tr"><span class="exp" style="left:24px"></span><span class="chip" style="left:45px;width:54px"><svg><use href="#tdoc"/></svg><span class="ms-1">フィーチャ</span></span></div>
          <div class="tr"><span class="chip" style="left:58px;width:70px"><svg><use href="#tdoc"/></svg><span class="ms-1">パーツコピー1</span></span></div>
          <div class="tr"><span class="chip" style="left:56px;width:55px"><svg><use href="#tpat"/></svg><span class="ms-1">パターン1</span></span></div>
        </div>
      </div>
      <div class="prompt d-flex jp">
        <svg width="13" height="10" class="mt-1 flex-none" viewBox="0 0 16 12"><use href="#prb"/></svg>
        <span style="white-space:nowrap;width:52px">プロンプトバー</span>
        <div class="pinput"></div>
        <div class="copyr">Copyright(C)2018INTER MESH JAPAN CO.,LTD. All Rights Reserved</div>
        <div class="ptools d-flex align-items-center">
          <svg width="7" height="10" viewBox="0 0 7 10"><path d="M3.500 0l3 4H.5zM3.500 10l3-4H.5z" fill="#666"/></svg>
          <svg width="10" height="11" viewBox="0 0 10 11"><path d="M5 1l4 9H7L6 8H4L3 10H1z" fill="#222"/></svg>
          <svg width="8" height="9" viewBox="0 0 10 11"><path d="M5 1l4 9H7L6 8H4L3 10H1z" fill="#333"/></svg>
          <svg width="9" height="9" viewBox="0 0 9 9"><path d="M1 4l3.500-3L8 4M1 8l3.500-3L8 8" fill="none" stroke="#333"/></svg>
          <svg width="9" height="9" viewBox="0 0 9 9"><path d="M0 1h9v1.500H0zM0 4h9L4.500 8z" fill="#222"/></svg>
          <svg width="7" height="9" viewBox="0 0 7 9"><path d="M2 0h3v5H2zM3.500 5v4" fill="#8a8e94" stroke="#555" stroke-width=".6"/></svg>
          <svg width="9" height="9" viewBox="0 0 9 9"><path d="M1 1l7 7M8 1L1 8" stroke="#222" stroke-width="1.500"/></svg>
        </div>
      </div>
    </div>
    <div class="side d-flex flex-column flex-fill jp">
      <svg width="13" height="13" class="mt-1"><use href="#film"/></svg>
      <svg width="13" height="13" style="margin-top:12px"><use href="#lib"/></svg>
      <svg width="13" height="13" style="margin-top:5px"><use href="#pics"/></svg>
      <svg width="13" height="13" style="margin-top:6px"><use href="#key"/></svg>
      <div class="vtxt mt-1">ジェネレーティブデザイン</div>
      <svg width="11" height="11" style="margin-top:4px"><use href="#heat"/></svg>
    </div>
  </div>
  <div class="status jp">
    <div class="stmsg">設計意図は24個の面を調整中</div>
    <div class="stsearch">コマンドを検索</div>
    <div class="sticons d-flex align-items-center">
      <svg viewBox="0 0 16 16"><path d="M2 9V8h7V5l5 3.500L9 12V9z" fill="#fff"/></svg>
      <svg viewBox="0 0 16 16"><rect x="3" y="3" width="10" height="10" fill="#bcd6ef" stroke="#e6f0fa"/><circle cx="8" cy="8" r="2.500" fill="#223"/></svg>
      <svg viewBox="0 0 16 16"><circle cx="7" cy="6" r="4" fill="#9fd0f5" stroke="#fff"/><path d="M10 9l4 4" stroke="#e2a04a" stroke-width="2"/></svg>
      <svg viewBox="0 0 16 16"><rect x="3" y="3" width="10" height="10" fill="#fff"/><path d="M4 4l3 3M12 4l-3 3M4 12l3-3M12 12l-3-3" stroke="#1f4f85"/></svg>
      <svg viewBox="0 0 16 16"><use href="#v4"/></svg>
      <svg viewBox="0 0 16 16"><use href="#v7"/></svg>
      <svg viewBox="0 0 16 16"><use href="#t3"/></svg>
      <svg viewBox="0 0 16 16"><use href="#t4"/></svg>
      <svg viewBox="0 0 16 16"><path d="M2 2h8v8H2z" fill="#1f5ea8" stroke="#dce"/><path d="M6 6h8v8H6z" fill="#e8a52a"/></svg>
      <svg viewBox="0 0 16 16"><circle cx="8" cy="8" r="5" fill="#dfe7f2"/><path d="M5 8h6" stroke="#223" stroke-width="1.800"/></svg>
      <div class="slider"></div>
      <svg viewBox="0 0 16 16"><circle cx="8" cy="8" r="5" fill="#eef3fa"/><path d="M5 8h6M8 5v6" stroke="#223" stroke-width="1.500"/></svg>
      <svg viewBox="0 0 16 16"><circle cx="8" cy="8" r="5.500" fill="#e01f1f" stroke="#f2c9c9" stroke-width=".8"/></svg>
      <svg viewBox="0 0 16 16"><path d="M8 1l6 7h-3v4H5V8H2z" fill="#35b52f"/><path d="M2 14h12" stroke="#e2c04a" stroke-width="2"/></svg>
    </div>
  </div>
</div>
<script src="https://cdn.jsdelivr.net/npm/bootstrap@5.3.0/dist/js/bootstrap.bundle.min.js"></script>
</body>
</html>
